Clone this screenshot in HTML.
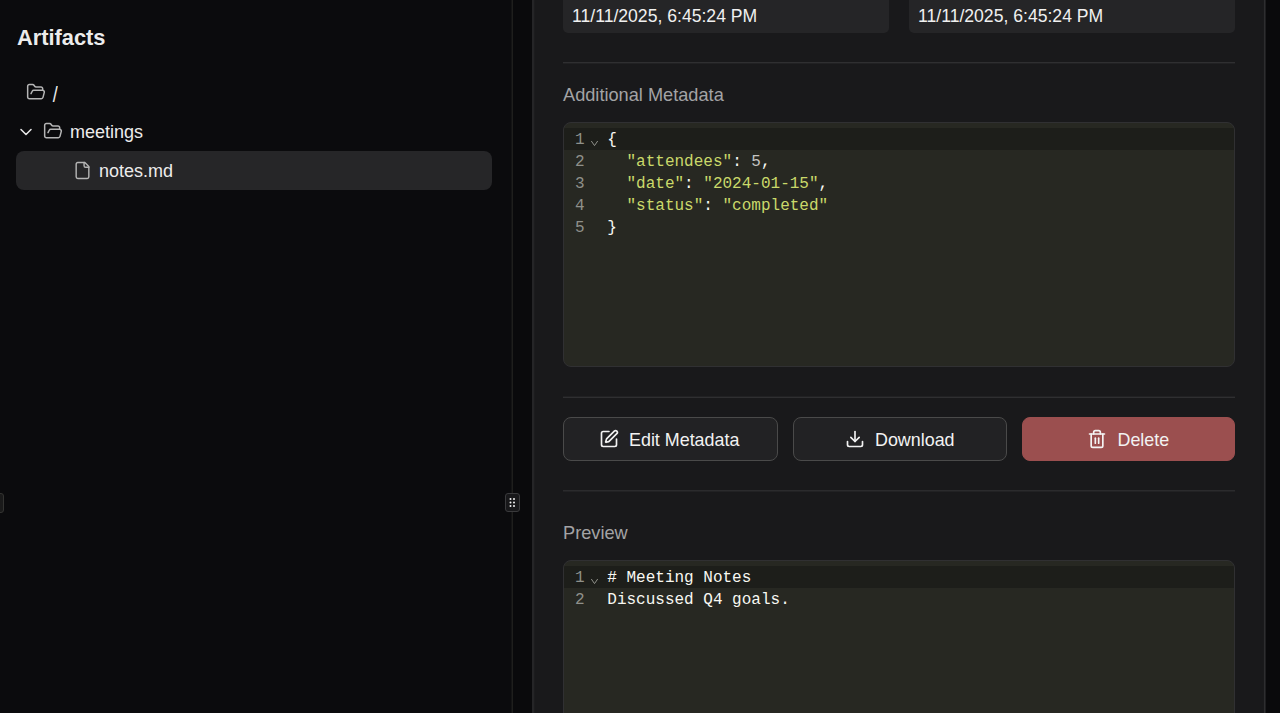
<!DOCTYPE html>
<html><head><meta charset="utf-8">
<style>
*{box-sizing:border-box;margin:0;padding:0}
html,body{width:1280px;height:713px;overflow:hidden;background:#0a0a0c;font-family:"Liberation Sans",sans-serif;color:#f2f2f2}
.abs{position:absolute}
svg{display:block}
#sidebar{position:absolute;left:0;top:0;width:511px;height:713px;background:#0b0b0d}
#divider{position:absolute;left:511px;top:0;width:2px;height:713px;background:linear-gradient(to right,#141415 0 1px,#1f1f1d 1px 2px)}
#mainbg{position:absolute;left:513px;top:0;width:767px;height:713px;background:#0a0a0c}
#panel{position:absolute;left:532px;top:-40px;width:734px;height:800px;background:#19191b;background-image:linear-gradient(to right,#252527 0 2px,#1c1c1e 2px 3px,transparent 3px calc(100% - 3px),#1a1a1c calc(100% - 3px) calc(100% - 2px),#2e2e30 calc(100% - 2px) calc(100% - 1px),#1e1e20 calc(100% - 1px))}
.title{position:absolute;left:17px;top:24.5px;font-size:21.8px;font-weight:700;color:#ececec;white-space:nowrap}
.tree{position:absolute;font-size:18px;color:#ececec;white-space:nowrap;line-height:20px}
.sel{position:absolute;left:16px;top:151px;width:476px;height:39px;background:#262628;border-radius:8px}
.field{position:absolute;top:-8px;height:41px;width:326px;background:#252527;border-radius:5px}
.ftext{position:absolute;font-size:17.6px;color:#f0f0f0;white-space:nowrap;line-height:20px}
.sep{position:absolute;left:563px;width:672px;height:1px;background:#2f2f31}
.label{position:absolute;left:563px;font-size:18.2px;color:#a3a3a5;white-space:nowrap;line-height:20px}
.editor{position:absolute;left:563px;width:672px;background:#272822;border:1px solid #303032;border-radius:8px;overflow:hidden}
.ln{position:absolute;left:0;width:672px;height:22px}
.act{background:#1d1e1a}
.code{position:absolute;font-family:"Liberation Mono",monospace;font-size:16px;line-height:22px;white-space:pre;color:#f8f8f2}
.gut{position:absolute;font-family:"Liberation Mono",monospace;font-size:16px;line-height:22px;white-space:pre;color:#8f908a}
.s{color:#cad96a}
.n{color:#c4c4c2}
.btn{position:absolute;top:417px;height:44px;border-radius:8px;background:#222224;border:1px solid #4a4a4a}
.btext{position:absolute;font-size:17.9px;color:#f2f2f2;white-space:nowrap;line-height:20px}
</style></head>
<body>
<div id="sidebar">
  <div class="title">Artifacts</div>
  <!-- root -->
  <svg class="abs" style="left:26px;top:82.3px" width="20" height="20" viewBox="0 0 24 24" fill="none" stroke="#b5b5b5" stroke-width="1.8" stroke-linecap="round" stroke-linejoin="round"><path d="m6 14 1.5-2.9A2 2 0 0 1 9.24 10H20a2 2 0 0 1 1.94 2.5l-1.54 6a2 2 0 0 1-1.95 1.5H4a2 2 0 0 1-2-2V5a2 2 0 0 1 2-2h3.9a2 2 0 0 1 1.69.9l.81 1.2a2 2 0 0 0 1.67.9H18a2 2 0 0 1 2 2v2"/></svg>
  <div class="tree" style="left:52.8px;top:83px;transform:scaleY(1.2);transform-origin:0 3px">/</div>
  <!-- meetings -->
  <svg class="abs" style="left:16.2px;top:121.5px" width="20" height="20" viewBox="0 0 24 24" fill="none" stroke="#e6e6e6" stroke-width="1.9" stroke-linecap="round" stroke-linejoin="round"><path d="m6 9 6 6 6-6"/></svg>
  <svg class="abs" style="left:43px;top:121.3px" width="20" height="20" viewBox="0 0 24 24" fill="none" stroke="#b5b5b5" stroke-width="1.8" stroke-linecap="round" stroke-linejoin="round"><path d="m6 14 1.5-2.9A2 2 0 0 1 9.24 10H20a2 2 0 0 1 1.94 2.5l-1.54 6a2 2 0 0 1-1.95 1.5H4a2 2 0 0 1-2-2V5a2 2 0 0 1 2-2h3.9a2 2 0 0 1 1.69.9l.81 1.2a2 2 0 0 0 1.67.9H18a2 2 0 0 1 2 2v2"/></svg>
  <div class="tree" style="left:70px;top:122px">meetings</div>
  <!-- selected -->
  <div class="sel"></div>
  <svg class="abs" style="left:72.6px;top:160.9px" width="19" height="19" viewBox="0 0 24 24" fill="none" stroke="#b5b5b5" stroke-width="1.8" stroke-linecap="round" stroke-linejoin="round"><path d="M15 2H6a2 2 0 0 0-2 2v16a2 2 0 0 0 2 2h12a2 2 0 0 0 2-2V7Z"/><path d="M14 2v4a2 2 0 0 0 2 2h4"/></svg>
  <div class="tree" style="left:99px;top:161px">notes.md</div>
  <!-- left edge handle -->
  <div class="abs" style="left:-4px;top:492.5px;width:8px;height:20px;border-radius:3px;background:#1a1a1a;border:1px solid #333331"></div>
</div>
<div id="divider"></div>
<div id="mainbg"></div>
<!-- resize grip -->
<div class="abs" style="left:505px;top:493px;width:15px;height:19px;border-radius:3px;background:#18181a;border:1px solid #3a3a3c"></div>
<svg class="abs" style="left:505px;top:493px" width="15" height="19" viewBox="0 0 15 19"><g fill="#f0f0f0"><circle cx="5.5" cy="6" r="1"/><circle cx="9" cy="6" r="1"/><circle cx="5.5" cy="9.5" r="1"/><circle cx="9" cy="9.5" r="1"/><circle cx="5.5" cy="13" r="1"/><circle cx="9" cy="13" r="1"/></g></svg>

<div id="panel"></div>
<!-- date fields -->
<div class="field" style="left:563px"></div>
<div class="field" style="left:909px"></div>
<div class="ftext" style="left:572px;top:6px">11/11/2025, 6:45:24 PM</div>
<div class="ftext" style="left:918px;top:6px">11/11/2025, 6:45:24 PM</div>
<div class="sep" style="top:62px;height:2px;background:linear-gradient(#2f2f31 0 1px,#212123 1px)"></div>
<div class="label" style="top:85px">Additional Metadata</div>
<!-- editor 1 -->
<div class="editor" style="top:122px;height:245px">
  <div class="ln act" style="top:5px"></div>
</div>
<div class="gut" style="left:575px;top:129px">1
2
3
4
5</div>
<svg class="abs" style="left:590px;top:140px" width="9" height="8" viewBox="0 0 9 8" fill="none" stroke="#8f908a" stroke-width="1"><path d="M1.3 1 4.5 5.6 7.7 1"/></svg>
<div class="code" style="left:607.3px;top:129px">{
  <span class="s">"attendees"</span>: <span class="n">5</span>,
  <span class="s">"date"</span>: <span class="s">"2024-01-15"</span>,
  <span class="s">"status"</span>: <span class="s">"completed"</span>
}</div>
<div class="sep" style="top:396px;height:2px;background:linear-gradient(#212123 0 1px,#2f2f31 1px)"></div>
<!-- buttons -->
<div class="btn" style="left:563px;width:215px"></div>
<div class="btn" style="left:793px;width:214px"></div>
<div class="btn" style="left:1022px;width:213px;background:#9b4f4f;border-color:#9b4f4f"></div>
<svg class="abs" style="left:599px;top:429px" width="20" height="20" viewBox="0 0 24 24" fill="none" stroke="#f2f2f2" stroke-width="2" stroke-linecap="round" stroke-linejoin="round"><path d="M12 3H5a2 2 0 0 0-2 2v14a2 2 0 0 0 2 2h14a2 2 0 0 0 2-2v-7"/><path d="M18.375 2.625a1 1 0 0 1 3 3l-9.013 9.014a2 2 0 0 1-.853.505l-2.873.84a.5.5 0 0 1-.62-.62l.84-2.873a2 2 0 0 1 .506-.852z"/></svg>
<div class="btext" style="left:629px;top:430px">Edit Metadata</div>
<svg class="abs" style="left:845px;top:429px" width="20" height="20" viewBox="0 0 24 24" fill="none" stroke="#f2f2f2" stroke-width="2" stroke-linecap="round" stroke-linejoin="round"><path d="M21 15v4a2 2 0 0 1-2 2H5a2 2 0 0 1-2-2v-4"/><polyline points="7 10 12 15 17 10"/><line x1="12" x2="12" y1="15" y2="3"/></svg>
<div class="btext" style="left:875px;top:430px">Download</div>
<svg class="abs" style="left:1087px;top:429px" width="20" height="20" viewBox="0 0 24 24" fill="none" stroke="#f4f4f4" stroke-width="2" stroke-linecap="round" stroke-linejoin="round"><path d="M3 6h18"/><path d="M19 6v14c0 1-1 2-2 2H7c-1 0-2-1-2-2V6"/><path d="M8 6V4c0-1 1-2 2-2h4c1 0 2 1 2 2v2"/><line x1="10" x2="10" y1="11" y2="17"/><line x1="14" x2="14" y1="11" y2="17"/></svg>
<div class="btext" style="left:1117.5px;top:430px">Delete</div>
<div class="sep" style="top:490px;height:2px;background:linear-gradient(#2b2b2d 0 1px,#222224 1px)"></div>
<div class="label" style="top:523px">Preview</div>
<!-- editor 2 -->
<div class="editor" style="top:560px;height:200px">
  <div class="ln act" style="top:5px"></div>
</div>
<div class="gut" style="left:575px;top:567px">1
2</div>
<svg class="abs" style="left:590px;top:578px" width="9" height="8" viewBox="0 0 9 8" fill="none" stroke="#8f908a" stroke-width="1"><path d="M1.3 1 4.5 5.6 7.7 1"/></svg>
<div class="code" style="left:607.3px;top:567px"># Meeting Notes
Discussed Q4 goals.</div>
</body></html>
